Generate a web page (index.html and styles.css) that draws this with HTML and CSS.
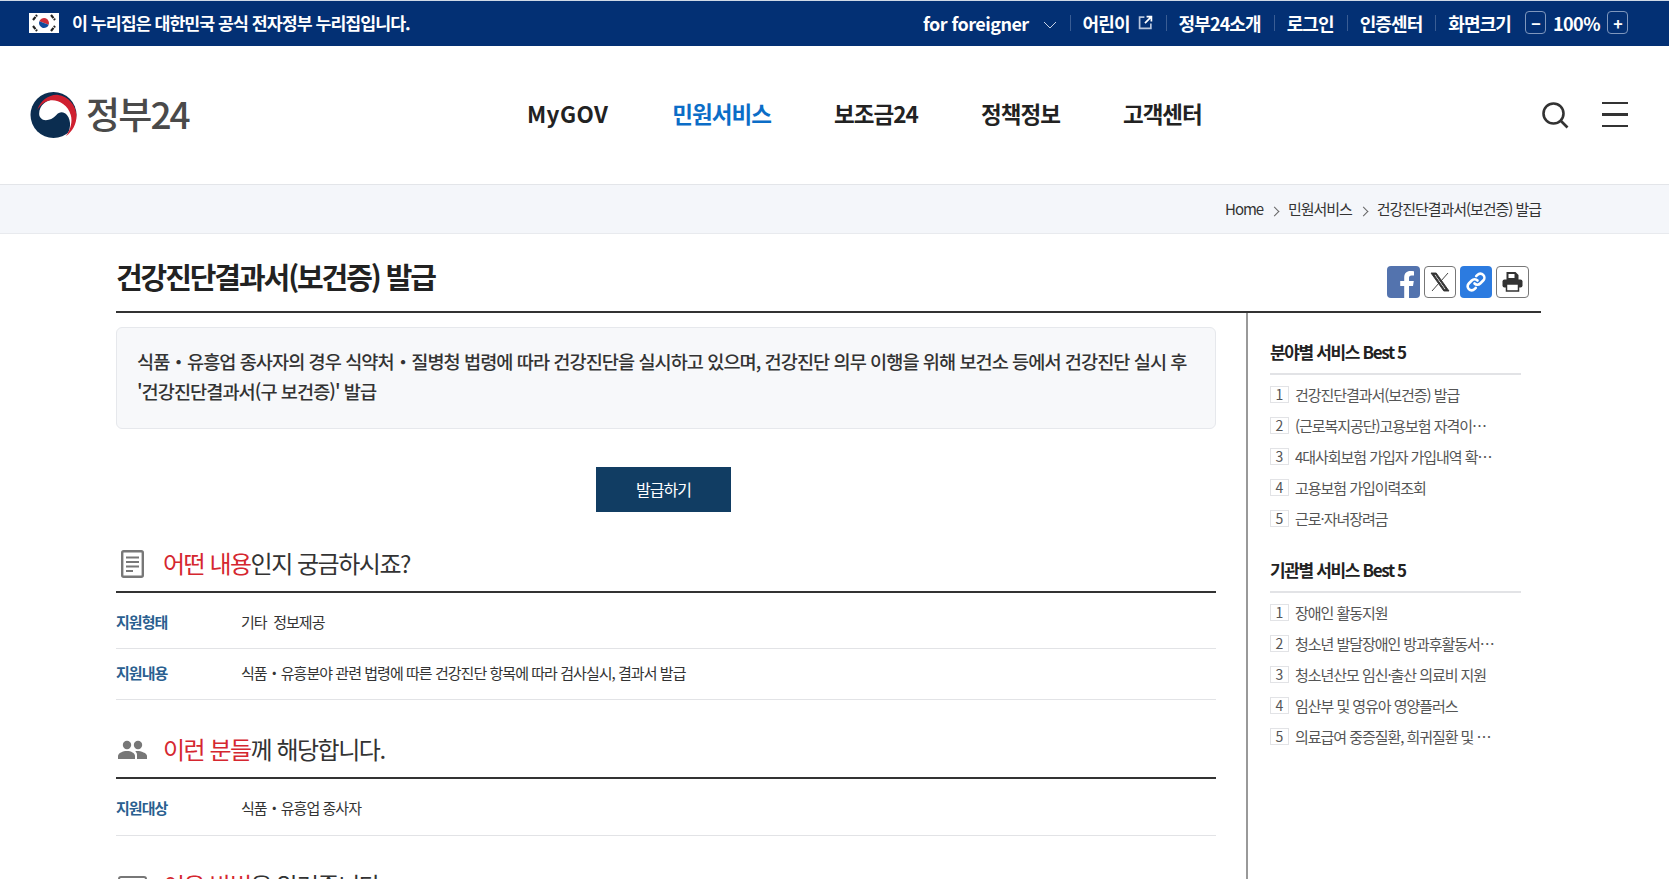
FILE: index.html
```html
<!DOCTYPE html>
<html lang="ko">
<head>
  <meta charset="UTF-8" />
  <title>건강진단결과서(보건증) 발급 | 정부24</title>
  <link rel="stylesheet" href="styles.css">
</head>
<body>

  <div class="topbar">
    <div class="gov-notice">
      <svg class="flag" viewBox="0 0 30 20">
        <rect width="30" height="20" fill="#fff"/>
        <path d="M10 10a5 5 0 0 1 10 0z" fill="#cd2e3a" transform="rotate(20 15 10)"/>
        <path d="M10 10a5 5 0 0 0 10 0z" fill="#0f4a9c" transform="rotate(20 15 10)"/>
        <g stroke="#222" stroke-width="2.200" stroke-dasharray="4 .8">
          <path d="M4 7l4-5"/><path d="M22 2l4 5"/><path d="M4 13l4 5"/><path d="M22 18l4-5"/>
        </g>
      </svg>
      <span>이 누리집은 대한민국 공식 전자정부 누리집입니다.</span>
    </div>
    <ul class="util">
      <li class="lang">for foreigner
        <svg class="chev" viewBox="0 0 14 8"><path d="M1 1l6 6 6-6" fill="none" stroke="#c8d3e6" stroke-width="1"/></svg>
      </li>
      <li>어린이
        <svg class="ext" viewBox="0 0 14 14"><path d="M6 2H1.500v10.500H12V8" fill="none" stroke="#b8c5dc" stroke-width="1.600"/><path d="M8 1.500h4.500V6M12.500 1.500L6.500 7.500" fill="none" stroke="#fff" stroke-width="1.600"/></svg>
      </li>
      <li>정부24소개</li>
      <li>로그인</li>
      <li>인증센터</li>
      <li class="zoom">화면크기
        <span class="zoom-btn">−</span><b>100%</b><span class="zoom-btn">+</span>
      </li>
    </ul>
  </div>

  <header class="header">
    <a class="logo">
      <svg class="logo-mark" viewBox="0 0 48 48">
        <circle cx="24" cy="24" r="24" fill="#0b2d50"/>
        <path d="M9 23C9 13 18 7 27 8 38 9 48 18 48 27 48 35 43 43 37 46 42 40 43 30 38 24 35 20 30 20 27 24 23 29 17 30 13 29 11 28 9 26 9 23Z" fill="#fff"/>
        <path d="M7 19C10 9 20 2 29 3 39 4 48 14 48 25 48 33 44 41 37 46 42 39 44 31 42 24 39 13 28 7 19 9 14 10 10 14 7 19Z" fill="#cf2030"/>
      </svg>
      <span class="logo-text">정부24</span>
    </a>
    <nav class="gnb">
      <a>MyGOV</a>
      <a class="on">민원서비스</a>
      <a>보조금24</a>
      <a>정책정보</a>
      <a>고객센터</a>
    </nav>
    <div class="header-tools">
      <svg class="ico-search" viewBox="0 0 28 28"><circle cx="12.500" cy="12.500" r="10" fill="none" stroke="#333" stroke-width="2.600"/><path d="M19.500 19.500l7 7" stroke="#333" stroke-width="2.600"/></svg>
      <div class="ico-menu"><i></i><i></i><i></i></div>
    </div>
  </header>

  <div class="crumbs">
    <div class="crumbs-in">
      <span>Home</span><em></em><span>민원서비스</span><em></em><span>건강진단결과서(보건증) 발급</span>
    </div>
  </div>

  <div class="wrap">
    <div class="title-row">
      <h1>건강진단결과서(보건증) 발급</h1>
      <div class="share">
        <span class="sns fb">
          <svg viewBox="0 0 32 32"><path d="M21.500 32V20h4l.8-5h-4.800v-3c0-1.500.6-2.500 2.600-2.500h2.400V5.200c-.8-.1-2.200-.2-3.600-.2-3.800 0-6.200 2.300-6.200 6.400V15h-4v5h4v12z" fill="#fff"/></svg>
        </span>
        <span class="sns line">
          <svg viewBox="0 0 24 24"><path d="M3 3h5.200L21 21h-5.200zM5.800 4.400L16.500 19.600h1.700L7.500 4.400zM20 3l-7 8M11 13l-7 8" fill="#333" stroke="#333" stroke-width=".9"/></svg>
        </span>
        <span class="sns link">
          <svg viewBox="0 0 24 24"><g fill="none" stroke="#fff" stroke-width="2.600" stroke-linecap="round"><path d="M10.500 13.500a4 4 0 0 0 5.700 0l3-3a4 4 0 0 0-5.700-5.700l-1.300 1.300"/><path d="M13.500 10.500a4 4 0 0 0-5.700 0l-3 3a4 4 0 0 0 5.700 5.700l1.300-1.300"/></g></svg>
        </span>
        <span class="sns line print">
          <svg viewBox="0 0 24 24"><path d="M6 2h9l3 3v5H6z" fill="#333"/><path d="M8 4h6v4H8z" fill="#fff"/><rect x="2" y="9.500" width="20" height="8" rx="2" fill="#333"/><path d="M6 14h12v7H6z" fill="#fff" stroke="#333" stroke-width="1.500"/></svg>
        </span>
      </div>
    </div>

    <div class="columns">
      <main class="content">
        <div class="intro">식품・유흥업 종사자의 경우 식약처・질병청 법령에 따라 건강진단을 실시하고 있으며, 건강진단 의무 이행을 위해 보건소 등에서 건강진단 실시 후 '건강진단결과서(구 보건증)' 발급</div>
        <div class="btn-row"><a class="btn">발급하기</a></div>

        <section class="sec">
          <h2>
            <svg class="sec-ico" viewBox="0 0 29 28"><rect x="4.200" y="1.200" width="20.600" height="25.600" rx="1.500" fill="none" stroke="#777" stroke-width="2.400"/><path d="M8 7.500h13M8 12h13M8 16.500h13M8 21h7" stroke="#777" stroke-width="1.800"/></svg>
            <span><em>어떤 내용</em>인지 궁금하시죠?</span>
          </h2>
          <dl class="row"><dt>지원형태</dt><dd>기타&nbsp; 정보제공</dd></dl>
          <dl class="row"><dt>지원내용</dt><dd>식품・유흥분야 관련 법령에 따른 건강진단 항목에 따라 검사실시, 결과서 발급</dd></dl>
        </section>

        <section class="sec">
          <h2>
            <svg class="sec-ico" viewBox="0 0 29 28"><g fill="#777" transform="translate(0 4)"><circle cx="9" cy="5" r="4.200"/><circle cx="20" cy="5" r="4.200"/><path d="M0 19v-3c0-3 5-5 9-5s8 2 8 5v3z"/><path d="M19 11c4 0 10 2 10 5v3h-10v-4c0-1.500-.6-2.800-1.800-3.700.6-.2 1.200-.3 1.800-.3z"/></g></svg>
            <span><em>이런 분들</em>께 해당합니다.</span>
          </h2>
          <dl class="row"><dt>지원대상</dt><dd>식품・유흥업 종사자</dd></dl>
        </section>

        <section class="sec">
          <h2>
            <svg class="sec-ico" viewBox="0 0 29 28"><rect x="1" y="5" width="27" height="18" rx="2" fill="none" stroke="#777" stroke-width="2"/></svg>
            <span><em>이용 방법</em>을 알려줍니다.</span>
          </h2>
        </section>
      </main>

      <aside class="side">
        <h3>분야별 서비스 Best 5</h3>
        <ol class="best">
          <li><b>1</b><span>건강진단결과서(보건증) 발급</span></li>
          <li><b>2</b><span>(근로복지공단)고용보험 자격이력 내역서 발급</span></li>
          <li><b>3</b><span>4대사회보험 가입자 가입내역 확인서 발급</span></li>
          <li><b>4</b><span>고용보험 가입이력조회</span></li>
          <li><b>5</b><span>근로·자녀장려금</span></li>
        </ol>
        <h3>기관별 서비스 Best 5</h3>
        <ol class="best">
          <li><b>1</b><span>장애인 활동지원</span></li>
          <li><b>2</b><span>청소년 발달장애인 방과후활동서비스 지원</span></li>
          <li><b>3</b><span>청소년산모 임신·출산 의료비 지원</span></li>
          <li><b>4</b><span>임산부 및 영유아 영양플러스</span></li>
          <li><b>5</b><span>의료급여 중증질환, 희귀질환 및 중증난치질환</span></li>
        </ol>
      </aside>
    </div>
  </div>

</body>
</html>
```

FILE: styles.css
```css
* {
  box-sizing: border-box;
  margin: 0;
  padding: 0;
}

html, body {
  height: 879px;
  overflow: hidden;
}

body {
  background: #fff;
  color: #222;
  font-family: "Noto Sans CJK KR", "Noto Sans", sans-serif;
  letter-spacing: -0.06em;
}

ul, ol {
  list-style: none;
}

/* top bar */
.topbar {
  height: 46px;
  border-top: 1px solid #cfd9e6;
  background: #033074;
  color: #fff;
  display: flex;
  justify-content: space-between;
  align-items: center;
  padding: 0 41px 2px 29px;
  font-size: 18px;
  font-weight: 700;
}

.gov-notice {
  display: flex;
  align-items: center;
  gap: 13px;
  font-size: 17.300px;
}

.flag {
  width: 30px;
  height: 20px;
}

.util {
  display: flex;
  align-items: center;
  letter-spacing: -0.05em;
}

.util li {
  display: flex;
  align-items: center;
  padding: 0 13px;
  position: relative;
}

.util li + li::before {
  content: "";
  position: absolute;
  left: 0;
  top: 5px;
  bottom: 5px;
  width: 1px;
  background: #3a5d94;
}

.util .lang {
  letter-spacing: -0.03em;
}

.chev {
  width: 14px;
  height: 8px;
  margin-left: 14px;
  margin-top: 4px;
}

.ext {
  width: 15px;
  height: 15px;
  margin-left: 8px;
}

.util .zoom {
  padding-right: 0;
}

.zoom-btn {
  width: 21px;
  height: 23px;
  margin-left: 14px;
  border: 1px solid #7f97bd;
  border-radius: 4px;
  display: flex;
  align-items: center;
  justify-content: center;
  font-size: 16px;
  font-weight: 700;
}

.zoom b {
  font-weight: 700;
  margin-left: 7px;
  letter-spacing: -0.03em;
}

.zoom b + .zoom-btn {
  margin-left: 7px;
}

/* header */
.header {
  height: 139px;
  padding: 0 41px 4px 30px;
  display: flex;
  align-items: center;
  border-bottom: 1px solid #e3e5e9;
}

.logo {
  display: flex;
  align-items: center;
  gap: 9px;
}

.logo-mark {
  width: 47px;
  height: 46px;
  margin-top: 3px;
}

.logo-text {
  font-size: 37px;
  font-weight: 500;
  color: #4a4a4a;
  letter-spacing: -0.05em;
  line-height: 1;
}

.gnb {
  display: flex;
  gap: 63px;
  margin-left: 338px;
  font-size: 22.500px;
  font-weight: 700;
  color: #222;
}

.gnb a:first-child {
  letter-spacing: 0.02em;
  margin-right: 1px;
}

.gnb .on {
  color: #0b6dc7;
}

.header-tools {
  margin-left: auto;
  margin-top: 3px;
  display: flex;
  align-items: center;
  gap: 33px;
}

.ico-search {
  width: 28px;
  height: 28px;
}

.ico-menu {
  width: 26px;
  display: flex;
  flex-direction: column;
  gap: 9px;
}

.ico-menu i {
  height: 2.500px;
  background: #333;
}

/* breadcrumb */
.crumbs {
  height: 49px;
  background: #f4f6fa;
  border-bottom: 1px solid #e8eaee;
}

.crumbs-in {
  height: 100%;
  padding: 0 128px 2px 0;
  display: flex;
  justify-content: flex-end;
  align-items: center;
  font-size: 15px;
  color: #333;
  letter-spacing: -0.07em;
}

.crumbs em {
  width: 7px;
  height: 7px;
  margin: 6px 10px 0 8px;
  border-top: 1px solid #666;
  border-right: 1px solid #666;
  transform: rotate(45deg);
}

/* title */
.wrap {
  width: 1425px;
  margin-left: 116px;
}

.title-row {
  height: 79px;
  display: flex;
  justify-content: space-between;
  align-items: center;
  border-bottom: 2px solid #333;
}

h1 {
  font-size: 29px;
  font-weight: 700;
  letter-spacing: -0.072em;
  color: #222;
  margin-top: 7px;
}

.share {
  display: flex;
  gap: 4px;
  align-self: flex-end;
  margin: 0 12px 13px 0;
}

.sns {
  width: 32px;
  height: 32px;
  border-radius: 4px;
  overflow: hidden;
  display: block;
}

.sns svg {
  display: block;
  width: 100%;
  height: 100%;
}

.sns.fb {
  background: #5373ae;
  width: 33px;
}

.sns.line {
  border: 1px solid #777;
  padding: 3px;
}

.sns.print {
  width: 33px;
}

.sns.link {
  background: #2c7be0;
  padding: 4px;
}

/* columns */
.columns {
  display: flex;
}

.content {
  width: 1100px;
  padding-top: 14px;
  margin-right: 30px;
}

.intro {
  height: 102px;
  padding: 18px 20px;
  background: #f7f8fa;
  border: 1px solid #e6e8ec;
  border-radius: 6px;
  font-size: 18.620px;
  font-weight: 500;
  line-height: 30px;
  color: #333;
}

.btn-row {
  padding: 38px 0 2px 480px;
}

.btn {
  display: block;
  width: 135px;
  height: 45px;
  background: #113d63;
  color: #fff;
  font-size: 16px;
  line-height: 44px;
  text-align: center;
}

.sec h2 {
  height: 79px;
  margin-bottom: 5px;
  padding: 22px 0 0 2px;
  display: flex;
  align-items: center;
  gap: 16px;
  border-bottom: 2px solid #333;
  font-size: 24px;
  font-weight: 400;
  letter-spacing: -0.062em;
  color: #333;
}

.sec h2 span {
  padding-bottom: 2px;
}

.sec h2 em {
  font-style: normal;
  color: #d5272f;
}

.sec-ico {
  width: 29px;
  height: 28px;
}

.row {
  height: 51px;
  padding-bottom: 4px;
  display: flex;
  align-items: center;
  border-bottom: 1px solid #e2e3e6;
  font-size: 15px;
}

.row:only-of-type {
  height: 52px;
}

.row dt {
  width: 125px;
  color: #2a5f90;
  font-weight: 700;
}

.row dd {
  color: #333;
}

/* side */
.side {
  width: 295px;
  height: 700px;
  border-left: 2px solid #999;
  padding: 26px 20px 0 22px;
}

.side h3 {
  height: 36px;
  border-bottom: 2px solid #e2e3e6;
  font-size: 17px;
  font-weight: 700;
  letter-spacing: -0.08em;
  color: #222;
}

.best {
  padding: 4px 0 23px;
}

.best li {
  height: 31px;
  display: flex;
  align-items: center;
  gap: 6px;
  font-size: 15px;
  letter-spacing: -0.07em;
  color: #555;
}

.best b {
  flex: none;
  width: 19px;
  height: 17px;
  border: 1px solid #e2e3e6;
  font-weight: 400;
  font-size: 14px;
  line-height: 15px;
  text-align: center;
  letter-spacing: 0;
}

.best span {
  width: 200px;
  white-space: nowrap;
  overflow: hidden;
  text-overflow: ellipsis;
}
```
